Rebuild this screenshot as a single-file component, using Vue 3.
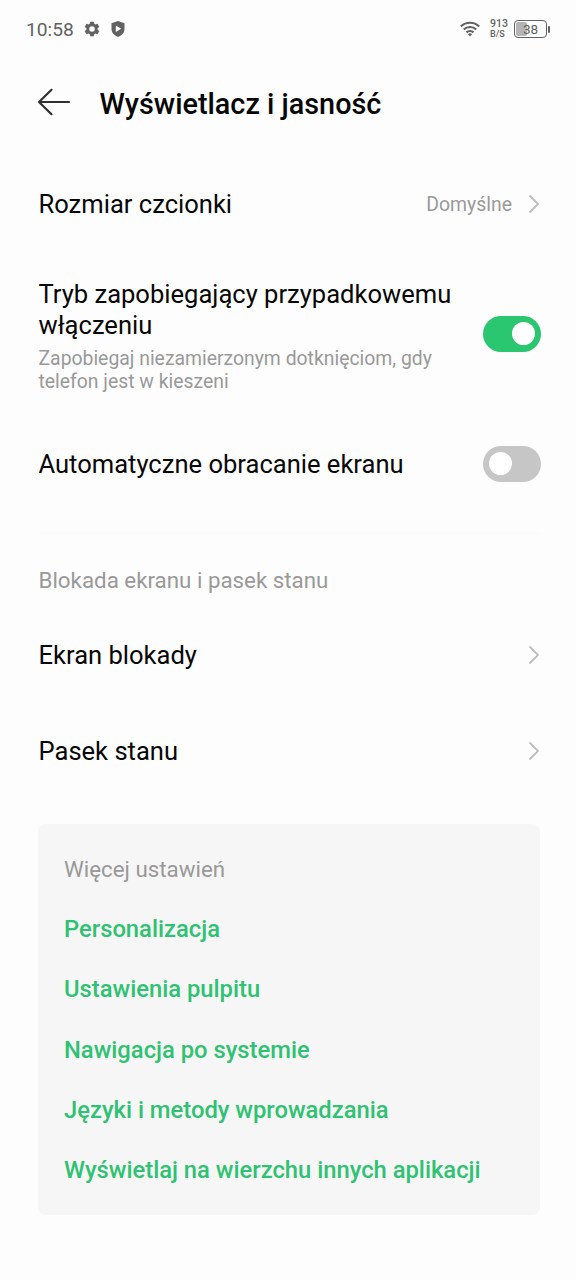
<script setup>
const links = [
  'Personalizacja',
  'Ustawienia pulpitu',
  'Nawigacja po systemie',
  'Języki i metody wprowadzania',
  'Wyświetlaj na wierzchu innych aplikacji',
]
</script>

<template>
  <div class="screen">
    <div class="status">
      <span class="time">10:58</span>
      <svg class="gear" width="16" height="16" viewBox="0 0 24 24">
        <path fill="#626262" fill-rule="evenodd" d="M9.3 1h5.4l.6 3.1 1.9 1.1 3-1 2.7 4.6-2.4 2.1v2.2l2.4 2.1-2.7 4.6-3-1-1.9 1.1-.6 3.1H9.3l-.6-3.1-1.9-1.1-3 1-2.7-4.6 2.4-2.1v-2.2L1.1 8.8l2.7-4.6 3 1 1.9-1.1zM12 7.8a4.2 4.2 0 1 0 0 8.4 4.2 4.2 0 0 0 0-8.4z" />
      </svg>
      <svg class="shield" width="14" height="16" viewBox="0 0 14 16">
        <path fill="#626262" d="M7 0l6.5 2.3v5.5c0 3.800-2.600 6.800-6.500 8.200C3.100 14.600.5 11.600.5 7.800V2.300z" />
        <path fill="#fdfdfd" d="M4.8 4.5v6.4l5.4-3.2z" />
      </svg>
      <span class="spacer"></span>
      <svg class="wifi" width="20" height="16" viewBox="0 0 20 16" fill="none" stroke="#626262" stroke-width="2.1">
        <path d="M.8 5.4a13.300 13.300 0 0 1 18.400 0" />
        <path d="M3.700 8.500a9.200 9.200 0 0 1 12.600 0" />
        <path d="M6.500 11.400a5.200 5.200 0 0 1 7 0" />
        <path d="M10 15.600l-2.100-2.300a3 3 0 0 1 4.200 0z" fill="#626262" stroke="none" />
      </svg>
      <div class="speed"><span>913</span><span class="unit">B/S</span></div>
      <div class="battery"><i class="level"></i><span class="percent">38</span></div>
      <i class="tip"></i>
    </div>

    <header class="header">
      <svg class="back" width="34" height="28" viewBox="0 0 34 28" fill="none" stroke="#303030" stroke-width="2.2" stroke-linecap="round" stroke-linejoin="round">
        <path d="M32 14H2M14.500 1.800L2 14l12.500 12.200" />
      </svg>
      <h1>Wyświetlacz i jasność</h1>
    </header>

    <div class="row font-row">
      <span class="label">Rozmiar czcionki</span>
      <span class="value">Domyślne</span>
      <svg class="chevron" width="12" height="20" viewBox="0 0 12 20"><path d="M1.500 1.500L10 10l-8.500 8.500" /></svg>
    </div>

    <div class="row pocket-row">
      <div class="texts">
        <div class="label">Tryb zapobiegający przypadkowemu<br>włączeniu</div>
        <div class="note">Zapobiegaj niezamierzonym dotknięciom, gdy<br>telefon jest w kieszeni</div>
      </div>
      <span class="switch on"><i></i></span>
    </div>

    <div class="row rotate-row">
      <span class="label">Automatyczne obracanie ekranu</span>
      <span class="switch"><i></i></span>
    </div>

    <div class="divider"></div>
    <h2>Blokada ekranu i pasek stanu</h2>

    <div class="row nav-row">
      <span class="label">Ekran blokady</span>
      <svg class="chevron" width="12" height="20" viewBox="0 0 12 20"><path d="M1.500 1.500L10 10l-8.500 8.500" /></svg>
    </div>
    <div class="row nav-row">
      <span class="label">Pasek stanu</span>
      <svg class="chevron" width="12" height="20" viewBox="0 0 12 20"><path d="M1.500 1.500L10 10l-8.500 8.500" /></svg>
    </div>

    <section class="card">
      <div class="card-title">Więcej ustawień</div>
      <div v-for="l in links" :key="l" class="link"><span>{{ l }}</span></div>
    </section>
  </div>
</template>

<style>
body { background: #fdfdfd; }
</style>

<style scoped>
.screen {
  box-sizing: border-box;
  width: 576px;
  height: 1280px;
  overflow: hidden;
  background: #fdfdfd;
  font-family: Roboto, "Noto Sans", sans-serif;
  color: #070707;
  white-space: nowrap;
}
.status {
  display: flex;
  align-items: center;
  height: 58px;
  box-sizing: border-box;
  padding: 0 27px 0 26px;
  color: #626262;
}
.time { font-size: 19.2px; width: 58px; }
.gear { margin-right: 11px; }
.spacer { flex: 1; }
.wifi { margin-right: 10px; }
.speed {
  display: flex;
  flex-direction: column;
  width: 18px;
  margin-right: 6px;
  font-size: 10.5px;
  line-height: 10px;
  font-weight: 500;
}
.unit { font-size: 9px; }
.battery {
  position: relative;
  box-sizing: border-box;
  width: 33px;
  height: 18px;
  border: 1.5px solid #626262;
  border-radius: 4px;
  font-size: 13.5px;
  line-height: 16px;
  text-align: center;
}
.level {
  position: absolute;
  left: 1px;
  top: 1px;
  width: 11px;
  height: 14px;
  border-radius: 2px;
  background: #b4b4b4;
}
.percent { position: relative; }
.tip { width: 2px; height: 7px; margin-left: 1px; margin-right: -1px; background: #626262; border-radius: 1px; }
.header {
  display: flex;
  align-items: center;
  height: 89px;
  margin-bottom: 1px;
  padding-left: 37px;
}
.back { margin-bottom: 1px; }
h1 { margin: 3px 0 0 28.5px; font-size: 28.8px; font-weight: 500; line-height: 34px; }
.row {
  display: flex;
  align-items: center;
  justify-content: space-between;
  padding: 0 35px 0 38.5px;
}
.label { font-size: 25.55px; line-height: 30.5px; }
.font-row { height: 113px; }
.value { margin-left: auto; margin-right: 16px; font-size: 19.4px; color: #999; }
.chevron { margin: 0 1px 1px 0; fill: none; stroke: #bdbdbd; stroke-width: 1.8; }
.pocket-row { height: 147px; }
.texts { padding-top: 3px; }
.note { margin-top: 8px; font-size: 19.37px; line-height: 22.5px; color: #999; }
.switch {
  display: flex;
  align-items: center;
  box-sizing: border-box;
  width: 58px;
  height: 35.5px;
  margin-bottom: 1.5px;
  padding: 0 6px;
  border-radius: 18px;
  background: #c6c6c6;
}
.switch i { width: 23px; height: 23px; border-radius: 50%; background: #fff; }
.switch.on { justify-content: flex-end; background: #2ac670; }
.rotate-row { height: 113px; }
.divider { height: 1px; margin: 12px 35px 0 38px; background: #fafafa; }
h2 { margin: 31px 0 12px 38.5px; font-size: 22.33px; line-height: 30px; font-weight: 400; color: #999; }
.nav-row { height: 96px; }
.card {
  box-sizing: border-box;
  height: 391px;
  margin: 25px 36px 0 38px;
  padding: 16px 0 0 26px;
  border-radius: 8px;
  background: #f6f6f6;
}
.card-title { height: 59px; line-height: 59px; font-size: 22.33px; color: #999; }
.link { height: 60.3px; line-height: 60.3px; font-size: 23.78px; font-weight: 500; color: #2ec272; }
</style>
